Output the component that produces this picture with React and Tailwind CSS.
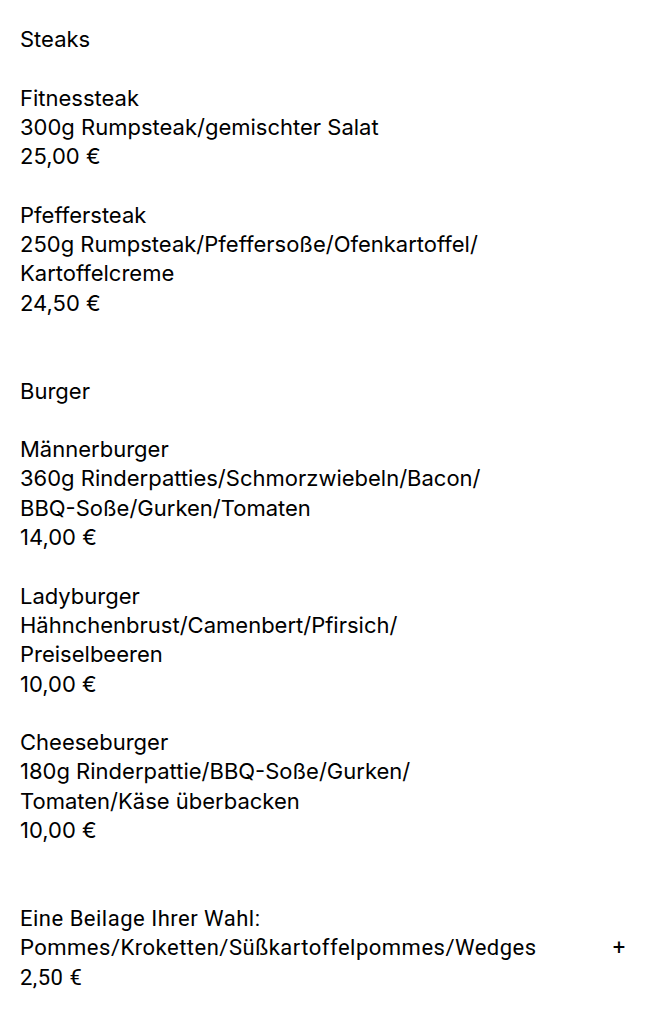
const lines = [
  "Steaks",
  "",
  "Fitnessteak",
  "300g Rumpsteak/gemischter Salat",
  "25,00 €",
  "",
  "Pfeffersteak",
  "250g Rumpsteak/Pfeffersoße/Ofenkartoffel/",
  "Kartoffelcreme",
  "24,50 €",
  "",
  "",
  "Burger",
  "",
  "Männerburger",
  "360g Rinderpatties/Schmorzwiebeln/Bacon/",
  "BBQ-Soße/Gurken/Tomaten",
  "14,00 €",
  "",
  "Ladyburger",
  "Hähnchenbrust/Camenbert/Pfirsich/",
  "Preiselbeeren",
  "10,00 €",
  "",
  "Cheeseburger",
  "180g Rinderpattie/BBQ-Soße/Gurken/",
  "Tomaten/Käse überbacken",
  "10,00 €",
  "",
  "",
];

export default function App() {
  return (
    <div className="min-h-[1024px] bg-white px-5 pt-[25px] text-[22px] leading-[29.3px] text-black" style={{ fontFamily: "Inter, 'Noto Sans', sans-serif" }}>
      {lines.map((l, i) => (
        <div key={i} className="h-[29.3px] whitespace-pre">{l}</div>
      ))}
      <div className="tracking-[0.5px]" style={{ fontFamily: "Roboto, sans-serif" }}>
        <div className="h-[29.3px]">Eine Beilage Ihrer Wahl:</div>
        <div className="flex h-[29.3px] items-start">
          <span>Pommes/Kroketten/Süßkartoffelpommes/Wedges</span>
          <span className="ml-[76px]">+</span>
        </div>
        <div className="h-[29.3px]">2,50 €</div>
      </div>
    </div>
  );
}
